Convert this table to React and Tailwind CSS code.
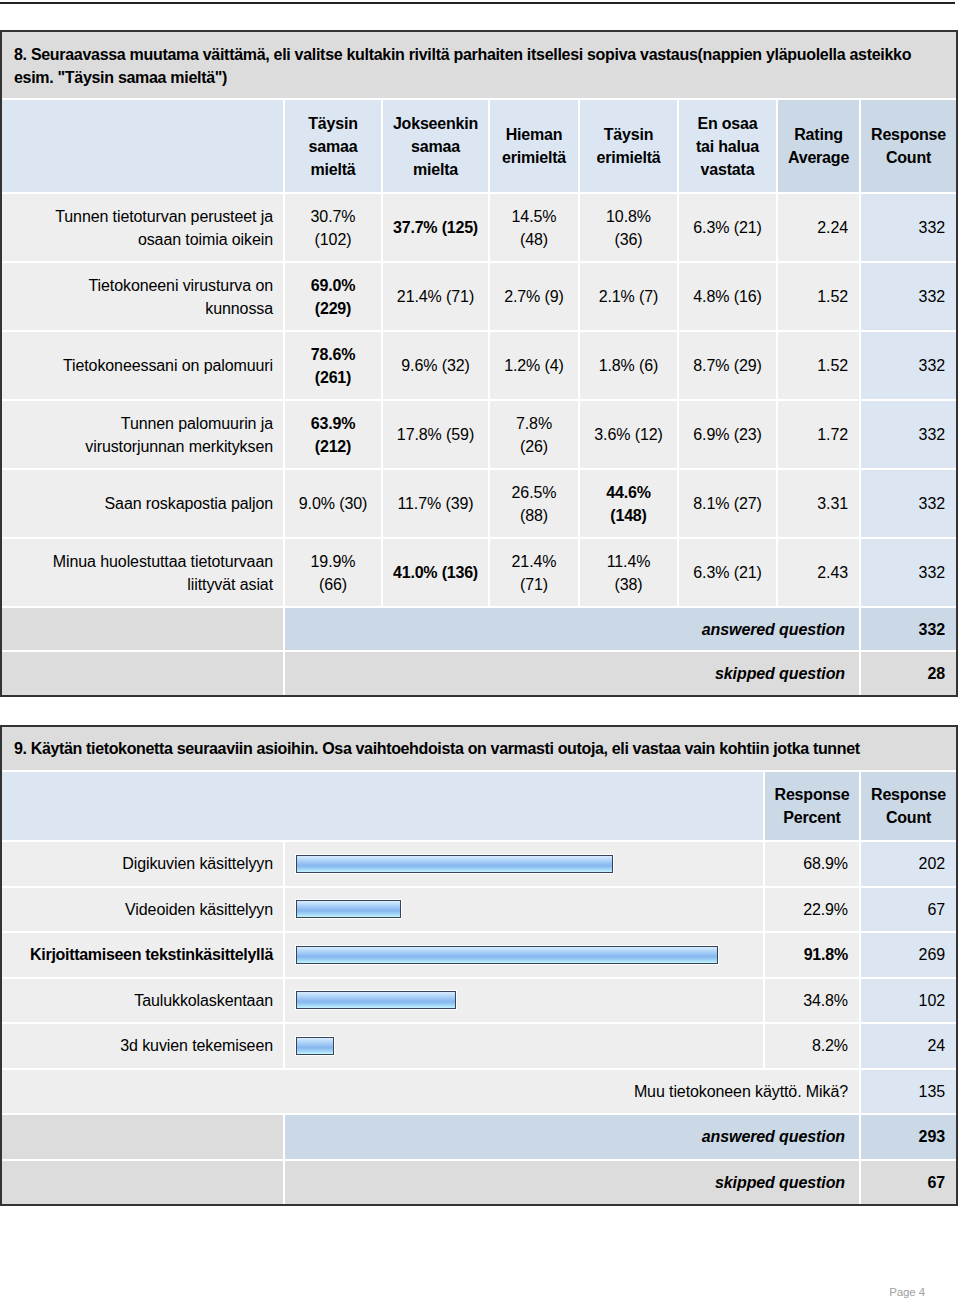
import React from "react";

const q8Rows = [
  { label: "Tunnen tietoturvan perusteet ja\nosaan toimia oikein", vals: ["30.7%\n(102)", "37.7% (125)", "14.5%\n(48)", "10.8%\n(36)", "6.3% (21)"], bold: 1, avg: "2.24", count: "332" },
  { label: "Tietokoneeni virusturva on\nkunnossa", vals: ["69.0%\n(229)", "21.4% (71)", "2.7% (9)", "2.1% (7)", "4.8% (16)"], bold: 0, avg: "1.52", count: "332" },
  { label: "Tietokoneessani on palomuuri", vals: ["78.6%\n(261)", "9.6% (32)", "1.2% (4)", "1.8% (6)", "8.7% (29)"], bold: 0, avg: "1.52", count: "332" },
  { label: "Tunnen palomuurin ja\nvirustorjunnan merkityksen", vals: ["63.9%\n(212)", "17.8% (59)", "7.8%\n(26)", "3.6% (12)", "6.9% (23)"], bold: 0, avg: "1.72", count: "332" },
  { label: "Saan roskapostia paljon", vals: ["9.0% (30)", "11.7% (39)", "26.5%\n(88)", "44.6%\n(148)", "8.1% (27)"], bold: 3, avg: "3.31", count: "332" },
  { label: "Minua huolestuttaa tietoturvaan\nliittyvät asiat", vals: ["19.9%\n(66)", "41.0% (136)", "21.4%\n(71)", "11.4%\n(38)", "6.3% (21)"], bold: 1, avg: "2.43", count: "332" },
];

const q8Heads = ["Täysin\nsamaa\nmieltä", "Jokseenkin\nsamaa\nmielta", "Hieman\nerimieltä", "Täysin\nerimieltä", "En osaa\ntai halua\nvastata"];

const q9Rows = [
  { label: "Digikuvien käsittelyyn", pct: 68.9, count: "202" },
  { label: "Videoiden käsittelyyn", pct: 22.9, count: "67" },
  { label: "Kirjoittamiseen tekstinkäsittelyllä", pct: 91.8, count: "269", bold: true },
  { label: "Taulukkolaskentaan", pct: 34.8, count: "102" },
  { label: "3d kuvien tekemiseen", pct: 8.2, count: "24" },
];

function Cell({ className = "", children }) {
  return <div className={"flex items-center whitespace-pre-line leading-[23px] " + className}>{children}</div>;
}

function Question8() {
  return (
    <div className="w-[958px] border-2 border-[#333] bg-white grid gap-[2px] grid-cols-[281px_96px_105px_88px_97px_97px_81px_95px] grid-rows-[66px_92px_repeat(6,67px)_42px_43px]">
      <div className="col-span-8 bg-[#dcdcdc] pl-[12px] pt-[11px] font-bold tracking-[-0.3px] leading-[23px]">
        8. Seuraavassa muutama väittämä, eli valitse kultakin riviltä parhaiten itsellesi sopiva vastaus(nappien yläpuolella asteikko
        <br />
        esim. "Täysin samaa mieltä")
      </div>

      <Cell className="bg-[#dce6f2]" />
      {q8Heads.map((h) => (
        <Cell key={h} className="bg-[#dce6f2] justify-center text-center font-bold tracking-[-0.2px]">{h}</Cell>
      ))}
      <Cell className="bg-[#cbd8e6] justify-center text-center font-bold tracking-[-0.2px]">{"Rating\nAverage"}</Cell>
      <Cell className="bg-[#cbd8e6] justify-center text-center font-bold tracking-[-0.2px]">{"Response\nCount"}</Cell>

      {q8Rows.map((r) => (
        <React.Fragment key={r.label}>
          <Cell className="bg-[#eeeeee] justify-end text-right pr-[10px]">{r.label}</Cell>
          {r.vals.map((v, i) => (
            <Cell key={i} className={"bg-[#eeeeee] justify-center text-center " + (i === r.bold ? "font-bold tracking-[-0.2px]" : "")}>{v}</Cell>
          ))}
          <Cell className="bg-[#eeeeee] justify-end pr-[11px]">{r.avg}</Cell>
          <Cell className="bg-[#dce6f2] justify-end pr-[11px]">{r.count}</Cell>
        </React.Fragment>
      ))}

      <Cell className="bg-[#dcdcdc]" />
      <Cell className="col-span-6 bg-[#cbd8e6] justify-end pr-[14px] font-bold italic">answered question</Cell>
      <Cell className="bg-[#cbd8e6] justify-end pr-[11px] font-bold">332</Cell>

      <Cell className="bg-[#dcdcdc]" />
      <Cell className="col-span-6 bg-[#dcdcdc] justify-end pr-[14px] font-bold italic">skipped question</Cell>
      <Cell className="bg-[#dcdcdc] justify-end pr-[11px] font-bold">28</Cell>
    </div>
  );
}

function Question9() {
  return (
    <div className="w-[958px] border-2 border-[#333] bg-white grid gap-[2px] grid-cols-[281px_478px_94px_95px] grid-rows-[43px_68px_repeat(8,43.5px)]">
      <Cell className="col-span-4 bg-[#dcdcdc] pl-[12px] font-bold tracking-[-0.35px]">
        9. Käytän tietokonetta seuraaviin asioihin. Osa vaihtoehdoista on varmasti outoja, eli vastaa vain kohtiin jotka tunnet
      </Cell>

      <Cell className="col-span-2 bg-[#dce6f2]" />
      <Cell className="bg-[#cbd8e6] justify-center text-center font-bold tracking-[-0.2px]">{"Response\nPercent"}</Cell>
      <Cell className="bg-[#cbd8e6] justify-center text-center font-bold tracking-[-0.2px]">{"Response\nCount"}</Cell>

      {q9Rows.map((r) => (
        <React.Fragment key={r.label}>
          <Cell className={"bg-[#eeeeee] justify-end pr-[10px] " + (r.bold ? "font-bold tracking-[-0.3px]" : "")}>{r.label}</Cell>
          <Cell className="bg-[#eeeeee] pl-[11px]">
            <div
              className="h-[18px] border border-[#34445a] bg-[linear-gradient(to_bottom,#dcedfd_0%,#b0d5f8_25%,#86b6ef_60%,#9fd4f5_82%,#c8f4fa_100%)] shadow-[0_0_0_1px_#ffffff]"
              style={{ width: Math.round(r.pct * 4.6) + "px" }}
            />
          </Cell>
          <Cell className={"bg-[#eeeeee] justify-end pr-[11px] " + (r.bold ? "font-bold tracking-[-0.2px]" : "")}>{r.pct.toFixed(1) + "%"}</Cell>
          <Cell className="bg-[#dce6f2] justify-end pr-[11px]">{r.count}</Cell>
        </React.Fragment>
      ))}

      <Cell className="col-span-3 bg-[#eeeeee] justify-end pr-[11px]">Muu tietokoneen käyttö. Mikä?</Cell>
      <Cell className="bg-[#dce6f2] justify-end pr-[11px]">135</Cell>

      <Cell className="bg-[#dcdcdc]" />
      <Cell className="col-span-2 bg-[#cbd8e6] justify-end pr-[14px] font-bold italic">answered question</Cell>
      <Cell className="bg-[#cbd8e6] justify-end pr-[11px] font-bold">293</Cell>

      <Cell className="bg-[#dcdcdc]" />
      <Cell className="col-span-2 bg-[#dcdcdc] justify-end pr-[14px] font-bold italic">skipped question</Cell>
      <Cell className="bg-[#dcdcdc] justify-end pr-[11px] font-bold">67</Cell>
    </div>
  );
}

export default function App() {
  return (
    <div className="w-[960px] h-[1300px] bg-white text-[16px] tracking-[-0.1px] text-black font-['Liberation_Sans',Arial,sans-serif]">
      <div className="pt-[2px]">
        <div className="w-[955px] h-[2px] bg-[#222]" />
      </div>
      <div className="mt-[26px]">
        <Question8 />
      </div>
      <div className="mt-[28px]">
        <Question9 />
      </div>
      <div className="flex justify-end pr-[35px] mt-[78px] text-[11.5px] text-[#a0a0a0]">Page 4</div>
    </div>
  );
}
